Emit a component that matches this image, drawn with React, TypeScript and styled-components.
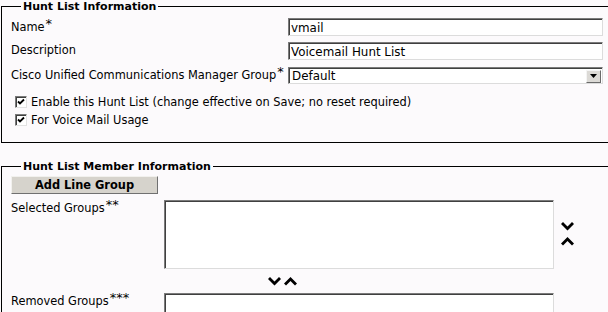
import React from 'react';
import styled, { createGlobalStyle } from 'styled-components';

const GlobalStyle = createGlobalStyle`
  html, body {
    margin: 0;
    padding: 0;
    background: #fcfafc;
    overflow: hidden;
  }
  body {
    font-family: "DejaVu Sans", Verdana, sans-serif;
    font-size: 11.4px;
    color: #000;
  }
`;

const Chevron: React.FC<{ dir: 'up' | 'down' }> = ({ dir }) => (
  <svg width="13" height="9" viewBox="0 0 13 9">
    {dir === 'down' ? (
      <polygon points="0,2 2,0 6.5,4.5 11,0 13,2 6.5,8.5" fill="#000" />
    ) : (
      <polygon points="0,6.5 2,8.5 6.5,4 11,8.5 13,6.5 6.5,0" fill="#000" />
    )}
  </svg>
);

const CheckMark = () => (
  <svg width="8" height="8" viewBox="0 0 8 8">
    <polyline points="1,3.5 3,5.5 7,1.5" fill="none" stroke="#000" strokeWidth="1.8" />
  </svg>
);

const App: React.FC = () => {
  return (
    <Page>
      <GlobalStyle />
      <Fieldset>
        <Legend>Hunt List Information</Legend>
        <FieldRow>
          <Label>
            Name<Req>*</Req>
          </Label>
          <TextBox value="vmail" readOnly />
        </FieldRow>
        <FieldRow>
          <Label>Description</Label>
          <TextBox value="Voicemail Hunt List" readOnly />
        </FieldRow>
        <FieldRow>
          <Label>
            Cisco Unified Communications Manager Group<Req>*</Req>
          </Label>
          <SelectBox>
            <span>Default</span>
            <DropButton>
              <svg width="7" height="4" viewBox="0 0 7 4">
                <polygon points="0,0 7,0 3.5,4" fill="#000" />
              </svg>
            </DropButton>
          </SelectBox>
        </FieldRow>
        <CheckList>
          <CheckRow>
            <CheckBox>
              <CheckMark />
            </CheckBox>
            Enable this Hunt List (change effective on Save; no reset required)
          </CheckRow>
          <CheckRow>
            <CheckBox>
              <CheckMark />
            </CheckBox>
            For Voice Mail Usage
          </CheckRow>
        </CheckList>
      </Fieldset>

      <Fieldset $open>
        <Legend>Hunt List Member Information</Legend>
        <AddButton>Add Line Group</AddButton>
        <GroupRow>
          <GroupLabel>
            Selected Groups<Req>**</Req>
          </GroupLabel>
          <ListBox />
          <SideArrows>
            <Chevron dir="down" />
            <Chevron dir="up" />
          </SideArrows>
        </GroupRow>
        <MiddleArrows>
          <Chevron dir="down" />
          <Chevron dir="up" />
        </MiddleArrows>
        <GroupRow>
          <GroupLabel>
            Removed Groups<Req>***</Req>
          </GroupLabel>
          <ListBox />
        </GroupRow>
      </Fieldset>
    </Page>
  );
};

export default App;

const Page = styled.div`
  padding-left: 1px;
  height: 312px;
  overflow: hidden;
`;

const Fieldset = styled.fieldset<{ $open?: boolean }>`
  margin: 0 0 ${(p) => (p.$open ? '0' : '17px')} 0;
  padding: 0 0 ${(p) => (p.$open ? '0' : '13px')} 9px;
  border: 1px solid #000;
  border-right: none;
  ${(p) => p.$open && 'border-bottom: none;'}
  min-width: 0;
`;

const Legend = styled.legend`
  font-weight: bold;
  font-size: 11px;
  line-height: 13px;
  padding: 0 2px;
  margin-left: 10px;
`;

const FieldRow = styled.div`
  display: grid;
  grid-template-columns: 277px 315px;
  align-items: start;
  height: 24px;
  &:first-of-type {
    margin-top: 5px;
  }
`;

const Label = styled.div`
  line-height: 13px;
  padding-top: 2px;
  white-space: nowrap;
`;

const GroupLabel = styled(Label)`
  width: 153px;
  flex: none;
  padding-top: 1px;
`;

const Req = styled.span`
  font-size: 13px;
  position: relative;
  top: -3px;
  margin-left: 1px;
`;

const inset = `
  box-sizing: border-box;
  background: #fff;
  border: 1px solid;
  border-color: #7b7b7b #dcdcdc #dcdcdc #7b7b7b;
  box-shadow: inset 1px 1px 0 #404040;
`;

const TextBox = styled.input`
  ${inset}
  width: 315px;
  height: 18px;
  margin: 0;
  padding: 1px 0 0 2px;
  font-family: "DejaVu Sans", Verdana, sans-serif;
  font-size: 11.9px;
  color: #000;
  outline: none;
`;

const SelectBox = styled.div`
  ${inset}
  width: 315px;
  height: 17px;
  display: flex;
  align-items: center;
  justify-content: space-between;
  padding: 1px 1px 0 3px;
  margin-top: 1px;
  font-size: 11.9px;
`;

const DropButton = styled.div`
  box-sizing: border-box;
  width: 15px;
  height: 13px;
  display: flex;
  align-items: center;
  justify-content: center;
  background: #dcdad6;
  border: 1px solid;
  border-color: #f4f4f4 #6a6a6a #6a6a6a #f4f4f4;
`;

const CheckList = styled.div`
  display: flex;
  flex-direction: column;
  margin-top: 3px;
`;

const CheckRow = styled.div`
  display: flex;
  align-items: center;
  gap: 4px;
  padding-left: 4px;
  height: 18px;
  line-height: 13px;
`;

const CheckBox = styled.span`
  box-sizing: border-box;
  width: 12px;
  height: 12px;
  background: #fff;
  border: 1px solid;
  border-color: #7b7b7b #e2e2e2 #e2e2e2 #7b7b7b;
  box-shadow: inset 1px 1px 0 #404040;
  display: flex;
  align-items: center;
  justify-content: center;
`;

const AddButton = styled.button`
  display: block;
  box-sizing: border-box;
  width: 147px;
  height: 18px;
  margin: 3px 0 6px 0;
  padding: 0;
  background: #d6d3cc;
  border: 1px solid;
  border-color: #f2f1ee #707070 #707070 #f2f1ee;
  font-family: "DejaVu Sans", Verdana, sans-serif;
  font-size: 11.4px;
  font-weight: bold;
  color: #000;
`;

const GroupRow = styled.div`
  display: flex;
  align-items: flex-start;
`;

const ListBox = styled.div`
  ${inset}
  width: 390px;
  height: 69px;
  flex: none;
`;

const SideArrows = styled.div`
  display: flex;
  flex-direction: column;
  gap: 6px;
  margin: 22px 0 0 7px;
`;

const MiddleArrows = styled.div`
  display: flex;
  gap: 3px;
  padding: 8px 0 7px 257px;
`;
